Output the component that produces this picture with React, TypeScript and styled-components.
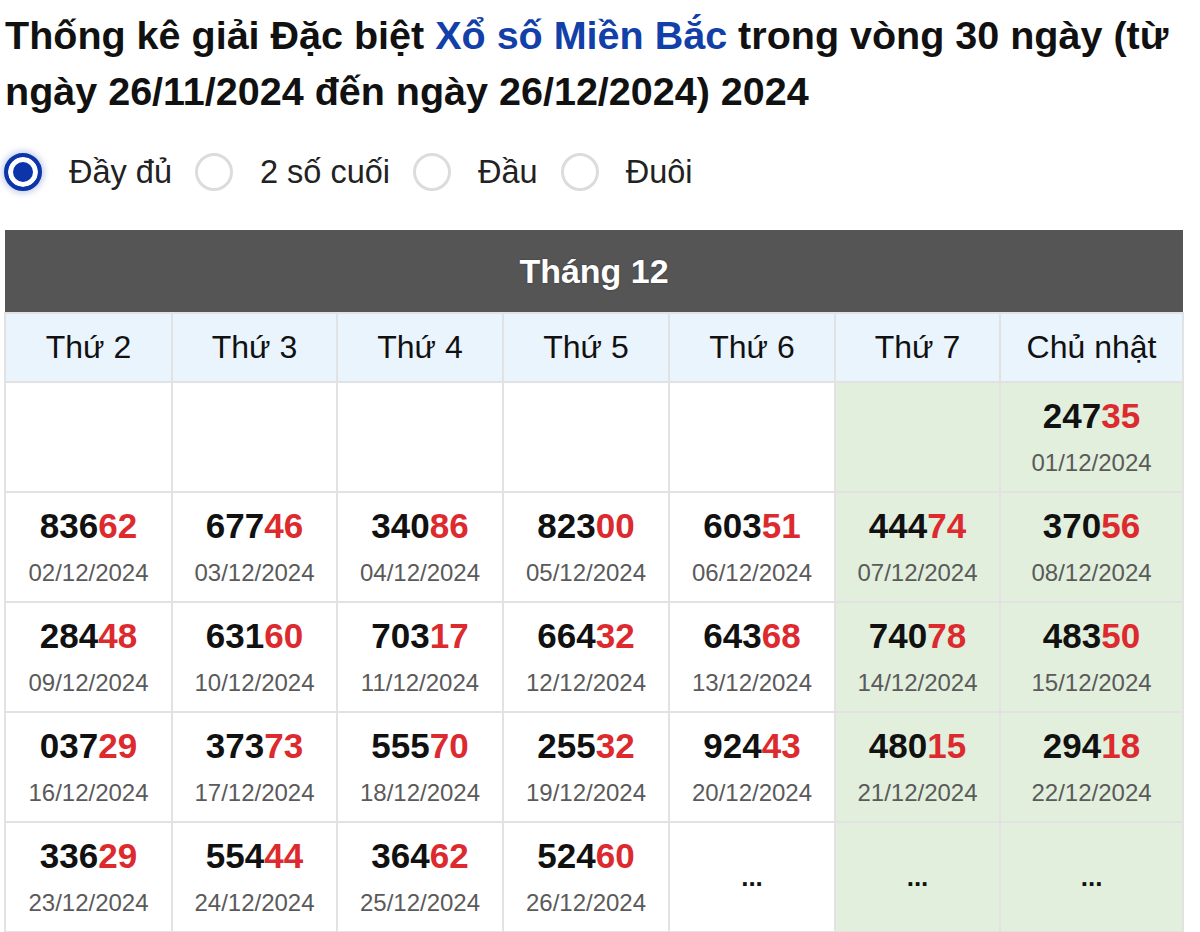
import React from 'react'
import styled, { createGlobalStyle } from 'styled-components'

const GlobalStyle = createGlobalStyle`
  body {
    margin: 0;
    background: #fff;
    font-family: 'Liberation Sans', Arial, sans-serif;
    color: #111;
  }
`

const Page = styled.div`
  padding: 0 4px;
  width: 1192px;
  box-sizing: border-box;
`

const Title = styled.h2`
  margin: 0;
  padding: 7px 0 0 1px;
  font-size: 39.5px;
  line-height: 56px;
  font-weight: 700;
  color: #111;
`

const Highlight = styled.span`
  color: #1240a8;
`

const RadioRow = styled.div`
  display: flex;
  align-items: center;
  height: 60px;
  margin-top: 23px;
  margin-bottom: 28px;
`

const RadioLabel = styled.label`
  display: flex;
  align-items: center;
  font-size: 32.5px;
  color: #222;
  margin-right: 23px;
`

const RadioCircle = styled.span<{ checked: boolean }>`
  width: 38px;
  height: 38px;
  box-sizing: border-box;
  border-radius: 50%;
  margin-right: 27px;
  flex-shrink: 0;
  border: ${({ checked }) => (checked ? '4px solid #0b35a8' : '3px solid #dcdcdc')};
  background: ${({ checked }) => (checked ? '#0b35a8' : '#fff')};
  box-shadow: ${({ checked }) => (checked ? 'inset 0 0 0 5px #fff, 0 0 6px 2px rgba(11, 53, 168, 0.25)' : 'none')};
`

const Table = styled.table`
  border-collapse: collapse;
  table-layout: fixed;
  width: 1178px;
`

const MonthCell = styled.th`
  background: #555;
  color: #fff;
  font-size: 34px;
  font-weight: 700;
  height: 82px;
  padding: 0;
  text-shadow: 0 0 2px rgba(0, 0, 0, 0.4);
`

const DayCell = styled.th`
  background: #eaf4fd;
  border: 2px solid #e2e2e2;
  font-size: 32px;
  font-weight: 400;
  color: #111;
  height: 67px;
  padding: 0;
`

const Cell = styled.td<{ weekend: boolean }>`
  background: ${({ weekend }) => (weekend ? '#e1efdc' : '#fff')};
  border: 2px solid #e2e2e2;
  text-align: center;
  height: 108px;
  padding: 0;
  vertical-align: middle;
`

const Number = styled.div`
  font-size: 35px;
  font-weight: 700;
  color: #111;
  line-height: 40px;
`

const Tail = styled.span`
  color: #dc2a2e;
`

const DateText = styled.div`
  font-size: 24px;
  color: #5a5a5a;
  line-height: 30px;
  margin-top: 12px;
`

const Dots = styled.div`
  font-size: 26px;
  font-weight: 700;
  color: #111;
`

const widths = [167, 165, 166, 166, 166, 165, 183]
const days = ['Thứ 2', 'Thứ 3', 'Thứ 4', 'Thứ 5', 'Thứ 6', 'Thứ 7', 'Chủ nhật']

type Entry = { num: string; date: string } | null | 'more'

const rows: Entry[][] = [
  [null, null, null, null, null, null, { num: '24735', date: '01/12/2024' }],
  [
    { num: '83662', date: '02/12/2024' },
    { num: '67746', date: '03/12/2024' },
    { num: '34086', date: '04/12/2024' },
    { num: '82300', date: '05/12/2024' },
    { num: '60351', date: '06/12/2024' },
    { num: '44474', date: '07/12/2024' },
    { num: '37056', date: '08/12/2024' },
  ],
  [
    { num: '28448', date: '09/12/2024' },
    { num: '63160', date: '10/12/2024' },
    { num: '70317', date: '11/12/2024' },
    { num: '66432', date: '12/12/2024' },
    { num: '64368', date: '13/12/2024' },
    { num: '74078', date: '14/12/2024' },
    { num: '48350', date: '15/12/2024' },
  ],
  [
    { num: '03729', date: '16/12/2024' },
    { num: '37373', date: '17/12/2024' },
    { num: '55570', date: '18/12/2024' },
    { num: '25532', date: '19/12/2024' },
    { num: '92443', date: '20/12/2024' },
    { num: '48015', date: '21/12/2024' },
    { num: '29418', date: '22/12/2024' },
  ],
  [
    { num: '33629', date: '23/12/2024' },
    { num: '55444', date: '24/12/2024' },
    { num: '36462', date: '25/12/2024' },
    { num: '52460', date: '26/12/2024' },
    'more',
    'more',
    'more',
  ],
]

const options = ['Đầy đủ', '2 số cuối', 'Đầu', 'Đuôi']

export default function App() {
  return (
    <Page>
      <GlobalStyle />
      <Title>
        Thống kê giải Đặc biệt <Highlight>Xổ số Miền Bắc</Highlight> trong vòng 30 ngày (từ ngày
        26/11/2024 đến ngày 26/12/2024) 2024
      </Title>
      <RadioRow>
        {options.map((o, i) => (
          <RadioLabel key={o}>
            <RadioCircle checked={i === 0} />
            {o}
          </RadioLabel>
        ))}
      </RadioRow>
      <Table>
        <colgroup>
          {widths.map((w, i) => (
            <col key={i} style={{ width: w }} />
          ))}
        </colgroup>
        <thead>
          <tr>
            <MonthCell colSpan={7}>Tháng 12</MonthCell>
          </tr>
          <tr>
            {days.map(d => (
              <DayCell key={d}>{d}</DayCell>
            ))}
          </tr>
        </thead>
        <tbody>
          {rows.map((row, ri) => (
            <tr key={ri}>
              {row.map((e, ci) => (
                <Cell key={ci} weekend={ci >= 5}>
                  {e === 'more' ? (
                    <Dots>...</Dots>
                  ) : e ? (
                    <>
                      <Number>
                        {e.num.slice(0, 3)}
                        <Tail>{e.num.slice(3)}</Tail>
                      </Number>
                      <DateText>{e.date}</DateText>
                    </>
                  ) : null}
                </Cell>
              ))}
            </tr>
          ))}
        </tbody>
      </Table>
    </Page>
  )
}
